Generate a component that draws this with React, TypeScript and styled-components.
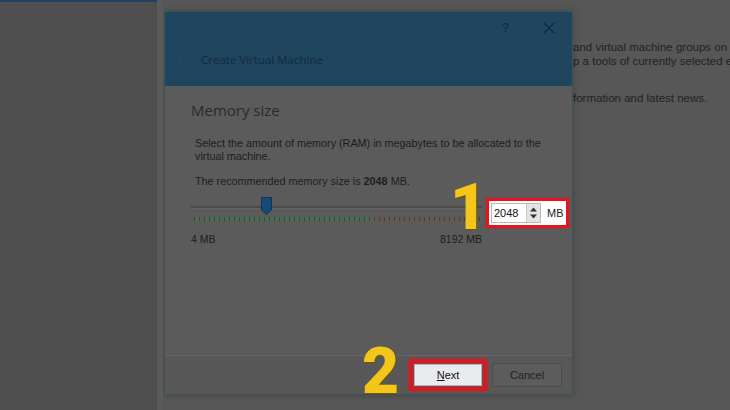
import { createGlobalStyle, styled } from "styled-components";

const GlobalStyle = createGlobalStyle`
  html, body, #root {
    margin: 0;
    padding: 0;
    width: 730px;
    height: 410px;
    overflow: hidden;
  }
  body {
    font-family: "Liberation Sans", Arial, sans-serif;
  }
`;

const Screen = styled.div`
  display: flex;
  width: 730px;
  height: 410px;
  background: #575757;
`;

const SidePane = styled.div`
  flex: 0 0 157px;
  background: #4f4f4f;
  border-top: 2px solid #1f4160;
  box-sizing: border-box;
`;

const Splitter = styled.div`
  flex: 0 0 6px;
  background: #5a5a5a;
`;

const MainPane = styled.div`
  position: relative;
  flex: 1;
  min-width: 0;
  overflow: hidden;
  background: #575757;
`;

const WelcomeText = styled.div`
  padding: 40px 0 0 410px;
  color: #222;
  font-size: 11.5px;
  line-height: 14px;
  white-space: nowrap;
`;

const WelcomeLine = styled.div<{ $gap?: number }>`
  margin-top: ${({ $gap }) => $gap ?? 0}px;
`;

const Dialog = styled.div`
  position: absolute;
  left: 1px;
  top: 11px;
  width: 409px;
  height: 384px;
  display: flex;
  flex-direction: column;
  background: #5b5b5b;
  border: 1px solid #3d5456;
  box-sizing: border-box;
  box-shadow: 0 0 6px rgba(0, 0, 0, 0.25);
`;

const Header = styled.div`
  height: 74px;
  background: #1f455f;
  display: flex;
  flex-direction: column;
  padding: 0 0 0 12px;
`;

const TopRow = styled.div`
  display: flex;
  justify-content: flex-end;
  align-items: center;
  gap: 34px;
  height: 32px;
  padding-right: 17px;
  color: #0f2a3c;
`;

const HelpMark = styled.span`
  font-size: 12px;
`;

const TitleRow = styled.div`
  display: flex;
  align-items: center;
  gap: 14px;
  margin-top: 8px;
  color: #112b3d;
  font-family: "Open Sans", "Liberation Sans", sans-serif;
  font-size: 11.5px;
`;

const Body = styled.div`
  flex: 1;
  padding: 14px 0 0 26px;
  display: flex;
  flex-direction: column;
`;

const Heading = styled.div`
  font-family: "Open Sans", "Liberation Sans", sans-serif;
  font-size: 15px;
  color: #2b2b2b;
  line-height: 20px;
`;

const Para = styled.p<{ $top: number }>`
  margin: ${({ $top }) => $top}px 0 0 4px;
  font-size: 10.8px;
  line-height: 13px;
  color: #1d1d1d;
`;

const SliderRow = styled.div`
  display: flex;
  align-items: flex-start;
  gap: 4px;
  margin-top: 9px;
  position: relative;
`;

const SliderBox = styled.div`
  width: 291px;
  display: flex;
  flex-direction: column;
`;

const Track = styled.div`
  position: relative;
  height: 18px;

  &::before {
    content: "";
    position: absolute;
    left: 0;
    right: 0;
    top: 9px;
    height: 2px;
    background: #4b4b4b;
    border-bottom: 1px solid #626262;
  }
`;

const Thumb = styled.svg`
  position: absolute;
  left: 70px;
  top: 0;
`;

const Ticks = styled.div`
  margin: 2px 0 0 3px;
  height: 4px;
  background:
    repeating-linear-gradient(90deg, rgba(40, 60, 40, 0.7) 0 1px, transparent 1px 5px),
    linear-gradient(90deg, #4e6a50 0 177px, #6a5752 177px 100%);
`;

const ScaleLabels = styled.div`
  display: flex;
  justify-content: space-between;
  margin-top: 12px;
  font-size: 10.5px;
  color: #1d1d1d;
`;

const SpinFrame = styled.div`
  display: flex;
  align-items: center;
  border: 3px solid #e3141d;
  background: #fff;
  padding: 1px 2px;
  margin-top: 1px;
  height: 22px;
  box-shadow: 0 0 2px rgba(227, 20, 29, 0.6);
`;

const SpinInput = styled.div`
  display: flex;
  align-items: center;
  width: 50px;
  height: 20px;
  border: 1px solid #b9b9b9;
  box-sizing: border-box;
  font-size: 11px;
  color: #111;
  padding-left: 2px;
`;

const SpinValue = styled.span`
  flex: 1;
`;

const SpinButtons = styled.div`
  width: 13px;
  height: 18px;
  display: flex;
  flex-direction: column;
  align-items: center;
  justify-content: center;
  gap: 2px;
  background: #e4e4e4;
  border-left: 1px solid #c8c8c8;
`;

const UnitLabel = styled.span`
  margin-left: 6px;
  font-size: 11px;
  color: #222;
`;

const Footer = styled.div`
  height: 38px;
  border-top: 1px solid #666;
  background: #585858;
  display: flex;
  align-items: center;
  justify-content: flex-end;
  gap: 5px;
  padding-right: 10px;
  position: relative;
`;

const NextFrame = styled.div`
  border: 4px solid #e3141d;
  padding: 1px;
  box-shadow: 0 0 2px rgba(227, 20, 29, 0.6);
`;

const Button = styled.div<{ $primary?: boolean }>`
  width: ${({ $primary }) => ($primary ? 68 : 70)}px;
  height: ${({ $primary }) => ($primary ? 22 : 24)}px;
  display: flex;
  align-items: center;
  justify-content: center;
  box-sizing: border-box;
  font-size: 11px;
  border: 1px solid ${({ $primary }) => ($primary ? "#b4b4b4" : "#4c4c4c")};
  background: ${({ $primary }) => ($primary ? "#e9ebee" : "#5c5c5c")};
  color: ${({ $primary }) => ($primary ? "#111" : "#222")};
`;

const Mnemonic = styled.span`
  text-decoration: underline;
`;

const Callout = styled.span<{ $left: number; $top: number }>`
  position: absolute;
  left: ${({ $left }) => $left}px;
  top: ${({ $top }) => $top}px;
  font-family: "Roboto", "Inter", "Liberation Sans", sans-serif;
  font-weight: 900;
  font-size: 64px;
  line-height: 1;
  color: #f4c61a;
  text-shadow: 1px 1px 0 #6a5a10;
`;

export default function App() {
  return (
    <>
      <GlobalStyle />
      <Screen>
        <SidePane />
        <Splitter />
        <MainPane>
          <WelcomeText>
            <WelcomeLine>and virtual machine groups on your computer.</WelcomeLine>
            <WelcomeLine>p a tools of currently selected element</WelcomeLine>
            <WelcomeLine $gap={23}>formation and latest news.</WelcomeLine>
          </WelcomeText>

          <Dialog>
            <Header>
              <TopRow>
                <HelpMark>?</HelpMark>
                <svg width="12" height="12" viewBox="0 0 12 12">
                  <path d="M1 1 L11 11 M11 1 L1 11" stroke="#0f2a3c" strokeWidth="1.2" />
                </svg>
              </TopRow>
              <TitleRow>
                <svg width="10" height="10" viewBox="0 0 10 10">
                  <path d="M9 5 H1.5 M5 1.5 L1.5 5 L5 8.5" stroke="#2f4a5c" strokeWidth="1" fill="none" />
                </svg>
                <span>Create Virtual Machine</span>
              </TitleRow>
            </Header>

            <Body>
              <Heading>Memory size</Heading>
              <Para $top={17}>
                Select the amount of memory (RAM) in megabytes to be allocated to the
                <br />
                virtual machine.
              </Para>
              <Para $top={12}>
                The recommended memory size is <b>2048</b> MB.
              </Para>

              <SliderRow>
                <SliderBox>
                  <Track>
                    <Thumb width="11" height="18" viewBox="0 0 11 18">
                      <path d="M0.5 0.5 H10.5 V13 L5.5 17.5 L0.5 13 Z" fill="#174a74" stroke="#0f3554" />
                    </Thumb>
                  </Track>
                  <Ticks />
                  <ScaleLabels>
                    <span>4 MB</span>
                    <span>8192 MB</span>
                  </ScaleLabels>
                </SliderBox>
                <Callout $left={259} $top={-21}>1</Callout>
                <SpinFrame>
                  <SpinInput>
                    <SpinValue>2048</SpinValue>
                    <SpinButtons>
                      <svg width="7" height="5" viewBox="0 0 7 5">
                        <path d="M0 4.5 L3.5 0.5 L7 4.5 Z" fill="#333" />
                      </svg>
                      <svg width="7" height="5" viewBox="0 0 7 5">
                        <path d="M0 0.5 L3.5 4.5 L7 0.5 Z" fill="#333" />
                      </svg>
                    </SpinButtons>
                  </SpinInput>
                  <UnitLabel>MB</UnitLabel>
                </SpinFrame>
              </SliderRow>
            </Body>

            <Footer>
              <Callout $left={197} $top={-16}>2</Callout>
              <NextFrame>
                <Button $primary>
                  <span>
                    <Mnemonic>N</Mnemonic>ext
                  </span>
                </Button>
              </NextFrame>
              <Button>Cancel</Button>
            </Footer>
          </Dialog>
        </MainPane>
      </Screen>
    </>
  );
}
